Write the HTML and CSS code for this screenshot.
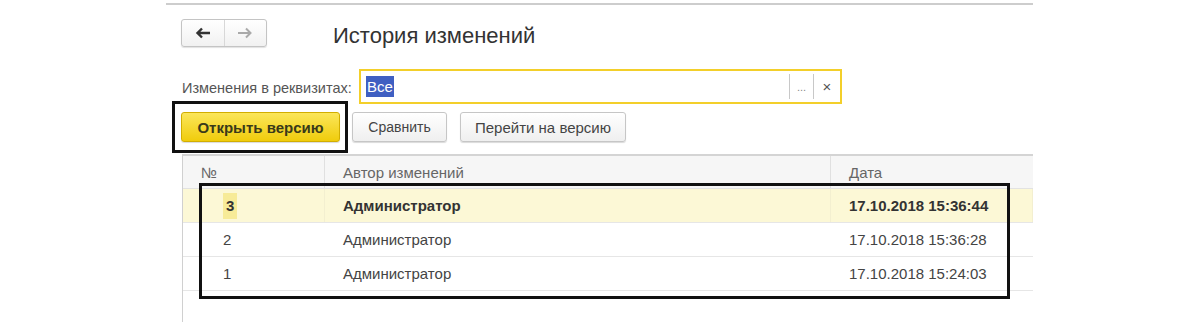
FILE: index.html
```html
<!doctype html>
<html lang="ru">
<head>
	<meta charset="UTF-8">
	<title>История изменений</title>
	<link rel="stylesheet" href="styles.css">
</head>
<body>
<div class="page">
	<div class="topline"></div>

	<div class="head">
		<div class="nav">
			<span class="nav-btn">
				<svg width="16" height="12" viewBox="0 0 16 12"><path d="M15 6H3M7 1.5L2.5 6L7 10.5" fill="none" stroke="#333" stroke-width="2.4"/></svg>
			</span>
			<span class="nav-btn">
				<svg width="16" height="12" viewBox="0 0 16 12"><path d="M1 6H13M9 1.5L13.5 6L9 10.5" fill="none" stroke="#aaa" stroke-width="2"/></svg>
			</span>
		</div>
		<h1 class="title">История изменений</h1>
	</div>

	<div class="filter">
		<label class="filter-label">Изменения в реквизитах:</label>
		<div class="field">
			<span class="field-value"><span class="sel">Все</span></span>
			<span class="field-btn dots">...</span>
			<span class="field-btn cross">×</span>
		</div>
	</div>

	<div class="actions">
		<div class="frame">
			<button class="btn btn-main">Открыть версию</button>
		</div>
		<button class="btn btn-cmp">Сравнить</button>
		<button class="btn btn-go">Перейти на версию</button>
	</div>

	<div class="grid">
		<div class="row row-head">
			<div class="cell">№</div>
			<div class="cell">Автор изменений</div>
			<div class="cell">Дата</div>
		</div>
		<div class="row row-active">
			<div class="cell num"><span class="cur">3</span></div>
			<div class="cell">Администратор</div>
			<div class="cell">17.10.2018 15:36:44</div>
		</div>
		<div class="row">
			<div class="cell num">2</div>
			<div class="cell">Администратор</div>
			<div class="cell">17.10.2018 15:36:28</div>
		</div>
		<div class="row">
			<div class="cell num">1</div>
			<div class="cell">Администратор</div>
			<div class="cell">17.10.2018 15:24:03</div>
		</div>
		<div class="mark"></div>
	</div>
</div>
</body>
</html>
```

FILE: styles.css
```css
body{margin:0;padding:0;background:#fff;font-family:"Liberation Sans",Arial,sans-serif;color:#333;}
button{font-family:inherit;}

.page{
	width:867px;
	margin-left:166px;
	padding-top:3px;
}
.topline{
	height:2px;
	background:#cdcdcd;
}

/* header */
.head{
	display:flex;
	align-items:center;
	height:28px;
	margin-top:14px;
}
.nav{
	display:flex;
	margin-left:15px;
	width:84px;
	height:26px;
	border:1px solid #c4c4c4;
	border-radius:3px;
	background:linear-gradient(#fff,#f1f1f1);
	box-shadow:0 1px 1px rgba(0,0,0,.12);
}
.nav-btn{
	flex:1;
	display:flex;
	align-items:center;
	justify-content:center;
}
.nav-btn+.nav-btn{border-left:1px solid #d8d8d8;}
.title{
	margin:0 0 0 66px;
	font-size:22px;
	font-weight:normal;
	color:#333;
	padding-top:6px;
}

/* filter */
.filter{
	display:flex;
	align-items:center;
	height:35px;
	margin-top:22px;
}
.filter-label{
	width:193px;
	padding-left:16px;
	box-sizing:border-box;
	font-size:14.5px;
	color:#555;
	padding-top:2px;
}
.field{
	display:flex;
	align-items:center;
	width:483px;
	height:35px;
	box-sizing:border-box;
	border:2px solid #f3cf2a;
	background:#fff;
}
.field-value{
	flex:1;
	padding-left:5px;
	font-size:15px;
}
.sel{
	background:#3f5fc2;
	color:#fff;
	padding:2px 1px;
}
.field-btn{
	display:flex;
	align-items:center;
	justify-content:center;
	height:25px;
	border-left:1px solid #c8c8c8;
	font-size:11px;
	color:#888;
}
.dots{width:23px;}
.cross{width:26px;font-size:15px;color:#555;}

/* buttons */
.actions{
	display:flex;
	align-items:center;
	height:30px;
	margin-top:8px;
}
.frame{
	flex:none;
	margin-left:6px;
	padding:8px 5px 8px 6px;
	border:3px solid #111;
	display:flex;
}
.btn{
	height:30px;
	box-sizing:border-box;
	border:1px solid #c6c6c6;
	border-radius:3px;
	background:linear-gradient(#fff,#efefef);
	box-shadow:0 1px 1px rgba(0,0,0,.15);
	font-size:15px;
	color:#444;
	padding:0;
}
.btn-main{
	width:159px;
	background:linear-gradient(#fbe65a,#f0cc0c);
	border-color:#d2ae00;
	font-weight:bold;
	color:#3a3a1a;
}
.btn-cmp{width:95px;margin-left:4px;font-size:14px;}
.btn-go{width:166px;margin-left:13px;}

/* table */
.grid{
	position:relative;
	width:850px;
	min-height:166px;
	margin-top:12px;
	margin-left:16px;
	border-top:2px solid #d4d4d4;
	border-left:1px solid #d0d0d0;
}
.row{
	display:grid;
	grid-template-columns:142px 506px 202px;
	height:33px;
	border-bottom:1px solid #e6e6e6;
	font-size:15px;
	color:#444;
}
.cell{
	display:flex;
	align-items:center;
	padding-left:18px;
}
.row-head{
	height:32px;
	background:#f6f6f6;
	border-bottom:1px solid #e2e2e2;
	color:#666;
}
.row-head .cell{border-right:1px solid #e0e0e0;}
.row-head .cell:last-child{border-right:none;}
.row-active{
	background:#fcf8d6;
	font-weight:bold;
	color:#333;
}
.row-active .cell{border-right:1px solid #f3efd0;}
.num{padding-left:40px;}
.cur{
	background:#f7eb98;
	padding:4px 3px 5px;
}

/* annotation frame over the rows */
.mark{
	position:absolute;
	left:16px;
	top:27px;
	width:805px;
	height:110px;
	border:3px solid #111;
	pointer-events:none;
}
```
